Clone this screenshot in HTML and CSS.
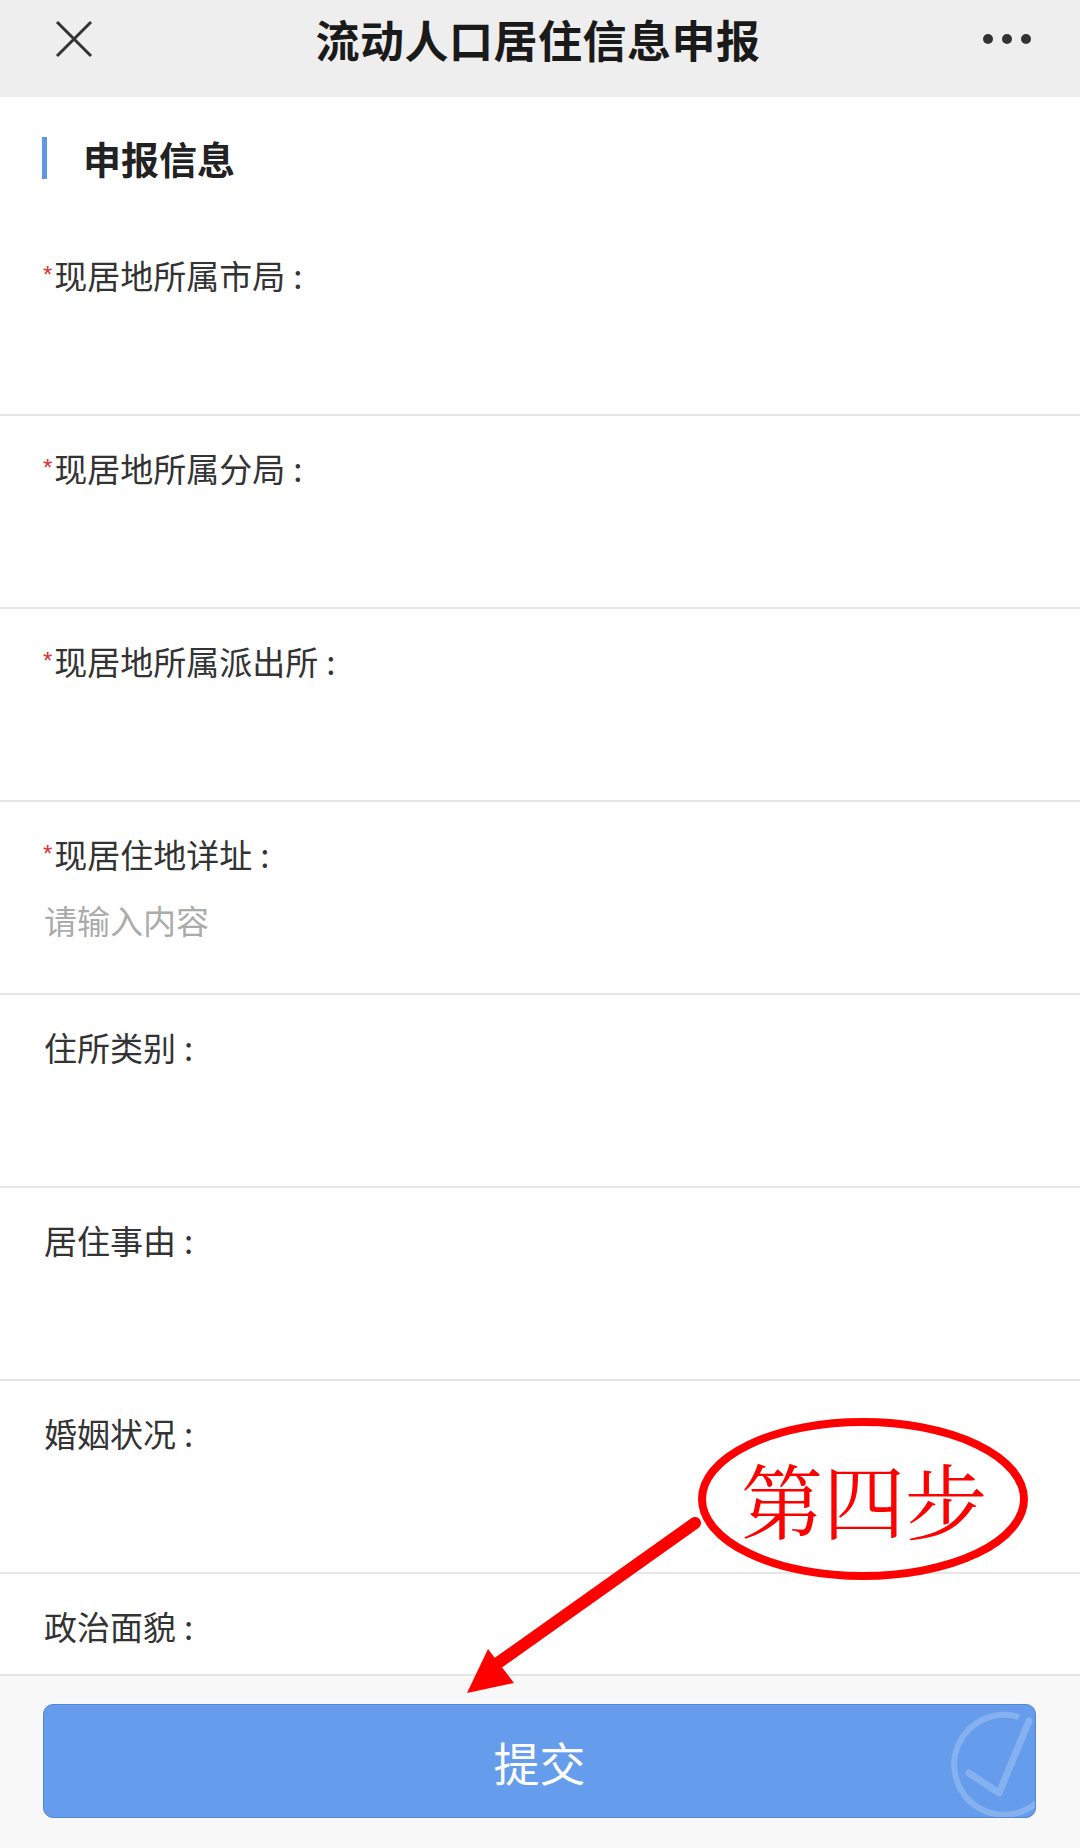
FILE: index.html
```html
<!DOCTYPE html>
<html lang="zh-CN">
<head>
<meta charset="utf-8">
<title>流动人口居住信息申报</title>
<link rel="stylesheet" href="styles.css">
</head>
<body>
<div class="page">
  <header class="topbar">
    <svg class="close-icon" viewBox="0 0 38 38" width="38" height="38"><path d="M2 2 L36 36 M36 2 L2 36" stroke="#333" stroke-width="3" fill="none"/></svg>
    <h1 class="title">流动人口居住信息申报</h1>
    <div class="more"><span class="dot"></span><span class="dot"></span><span class="dot"></span></div>
  </header>

  <main class="content">
    <div class="section-head"><span class="bar"></span><span class="section-title">申报信息</span></div>
    <div class="row"><div class="label"><span class="req">*</span>现居地所属市局<span class="colon">:</span></div></div>
    <div class="row"><div class="label"><span class="req">*</span>现居地所属分局<span class="colon">:</span></div></div>
    <div class="row"><div class="label"><span class="req">*</span>现居地所属派出所<span class="colon">:</span></div></div>
    <div class="row"><div class="label"><span class="req">*</span>现居住地详址<span class="colon">:</span></div><div class="placeholder">请输入内容</div></div>
    <div class="row"><div class="label">住所类别<span class="colon">:</span></div></div>
    <div class="row"><div class="label">居住事由<span class="colon">:</span></div></div>
    <div class="row"><div class="label">婚姻状况<span class="colon">:</span></div></div>
    <div class="row"><div class="label">政治面貌<span class="colon">:</span></div></div>
  </main>

  <footer class="footer">
    <button class="submit">提交
      <svg class="watermark" viewBox="0 0 993 114" width="993" height="114"><path d="M975 12 A50 50 0 1 0 1000 90" stroke="rgba(255,255,255,0.22)" stroke-width="6" fill="none"/><path d="M925 68 L955 88 L985 16" stroke="rgba(255,255,255,0.22)" stroke-width="7" fill="none" stroke-linecap="round" stroke-linejoin="round"/></svg>
    </button>
  </footer>

  <div class="annotation">
    <svg class="anno-svg" viewBox="0 0 1080 1848" width="1080" height="1848">
      <ellipse cx="863" cy="1499" rx="161" ry="77" stroke="#ff0000" stroke-width="8" fill="none"/>
      <line x1="695" y1="1523" x2="495" y2="1665" stroke="#ff0000" stroke-width="12" stroke-linecap="round"/>
      <polygon points="488,1649 514,1683 467,1693" fill="#ff0000"/>
    </svg>
    <span class="anno-text">第四步</span>
  </div>
</div>
</body>
</html>
```

FILE: styles.css
```css
* { box-sizing: border-box; }
html, body { margin: 0; padding: 0; }
body {
  width: 1080px;
  height: 1848px;
  font-family: "Noto Sans CJK SC", "Noto Sans", sans-serif;
  background: #ffffff;
  overflow: hidden;
}
.page {
  position: relative;
  display: flex;
  flex-direction: column;
  width: 1080px;
  height: 1848px;
}
.topbar {
  height: 97px;
  flex: 0 0 97px;
  background: #eeeeee;
  display: flex;
  align-items: center;
  justify-content: space-between;
  padding: 0 49px 20px 55px;
}
.close-icon { display: block; margin-top: 0; }
.title {
  margin: 0;
  font-size: 44px;
  font-weight: 700;
  color: #1a1a1a;
  letter-spacing: 0.5px;
  line-height: 1;
}
.more { display: flex; gap: 9px; width: 48px; }
.dot { width: 10px; height: 10px; border-radius: 50%; background: #333; display: block; }

.content {
  flex: 1 1 auto;
  overflow: hidden;
}
.section-head {
  height: 126px;
  display: flex;
  align-items: center;
  padding: 0 0 4px 42px;
}
.bar {
  width: 5px;
  height: 42px;
  background: #6196e6;
  display: block;
}
.section-title {
  margin-left: 36px;
  font-size: 38px;
  font-weight: 700;
  color: #222;
  line-height: 1;
}
.row {
  height: 193px;
  flex: 0 0 193px;
  border-bottom: 2px solid #e6e6e6;
  padding: 30px 0 0 44px;
}
.label {
  font-size: 33px;
  line-height: 44px;
  color: #333;
}
.colon { margin-left: 8px; }
.req {
  color: #e0302e;
  font-family: "Liberation Sans", sans-serif;
  font-size: 24px;
  vertical-align: 6px;
  margin-left: -1px;
  margin-right: 2px;
}
.placeholder {
  margin-top: 22px;
  font-size: 33px;
  line-height: 44px;
  color: #ababab;
}
.footer {
  flex: 0 0 174px;
  height: 174px;
  background: #f8f8f8;
  border-top: 2px solid #e4e4e4;
  padding: 28px 44px 0 43px;
}
.submit {
  position: relative;
  overflow: hidden;
  width: 993px;
  height: 114px;
  border: 1px solid #5486d4;
  border-radius: 10px;
  background: #659cec;
  color: #ffffff;
  font-family: "Noto Sans CJK SC", sans-serif;
  font-size: 46px;
  line-height: 1;
  padding: 0;
  display: flex;
  align-items: center;
  justify-content: center;
}
.watermark {
  position: absolute;
  left: 0;
  top: 0;
}
.annotation {
  position: absolute;
  left: 0;
  top: 0;
  width: 1080px;
  height: 1848px;
  pointer-events: none;
}
.anno-svg { position: absolute; left: 0; top: 0; }
.anno-text {
  position: absolute;
  left: 741px;
  top: 1448px;
  font-family: "Noto Serif CJK SC", "Noto Sans CJK SC", serif;
  font-weight: 400;
  font-size: 82px;
  line-height: 100px;
  color: #ff0000;
  white-space: nowrap;
}
```
